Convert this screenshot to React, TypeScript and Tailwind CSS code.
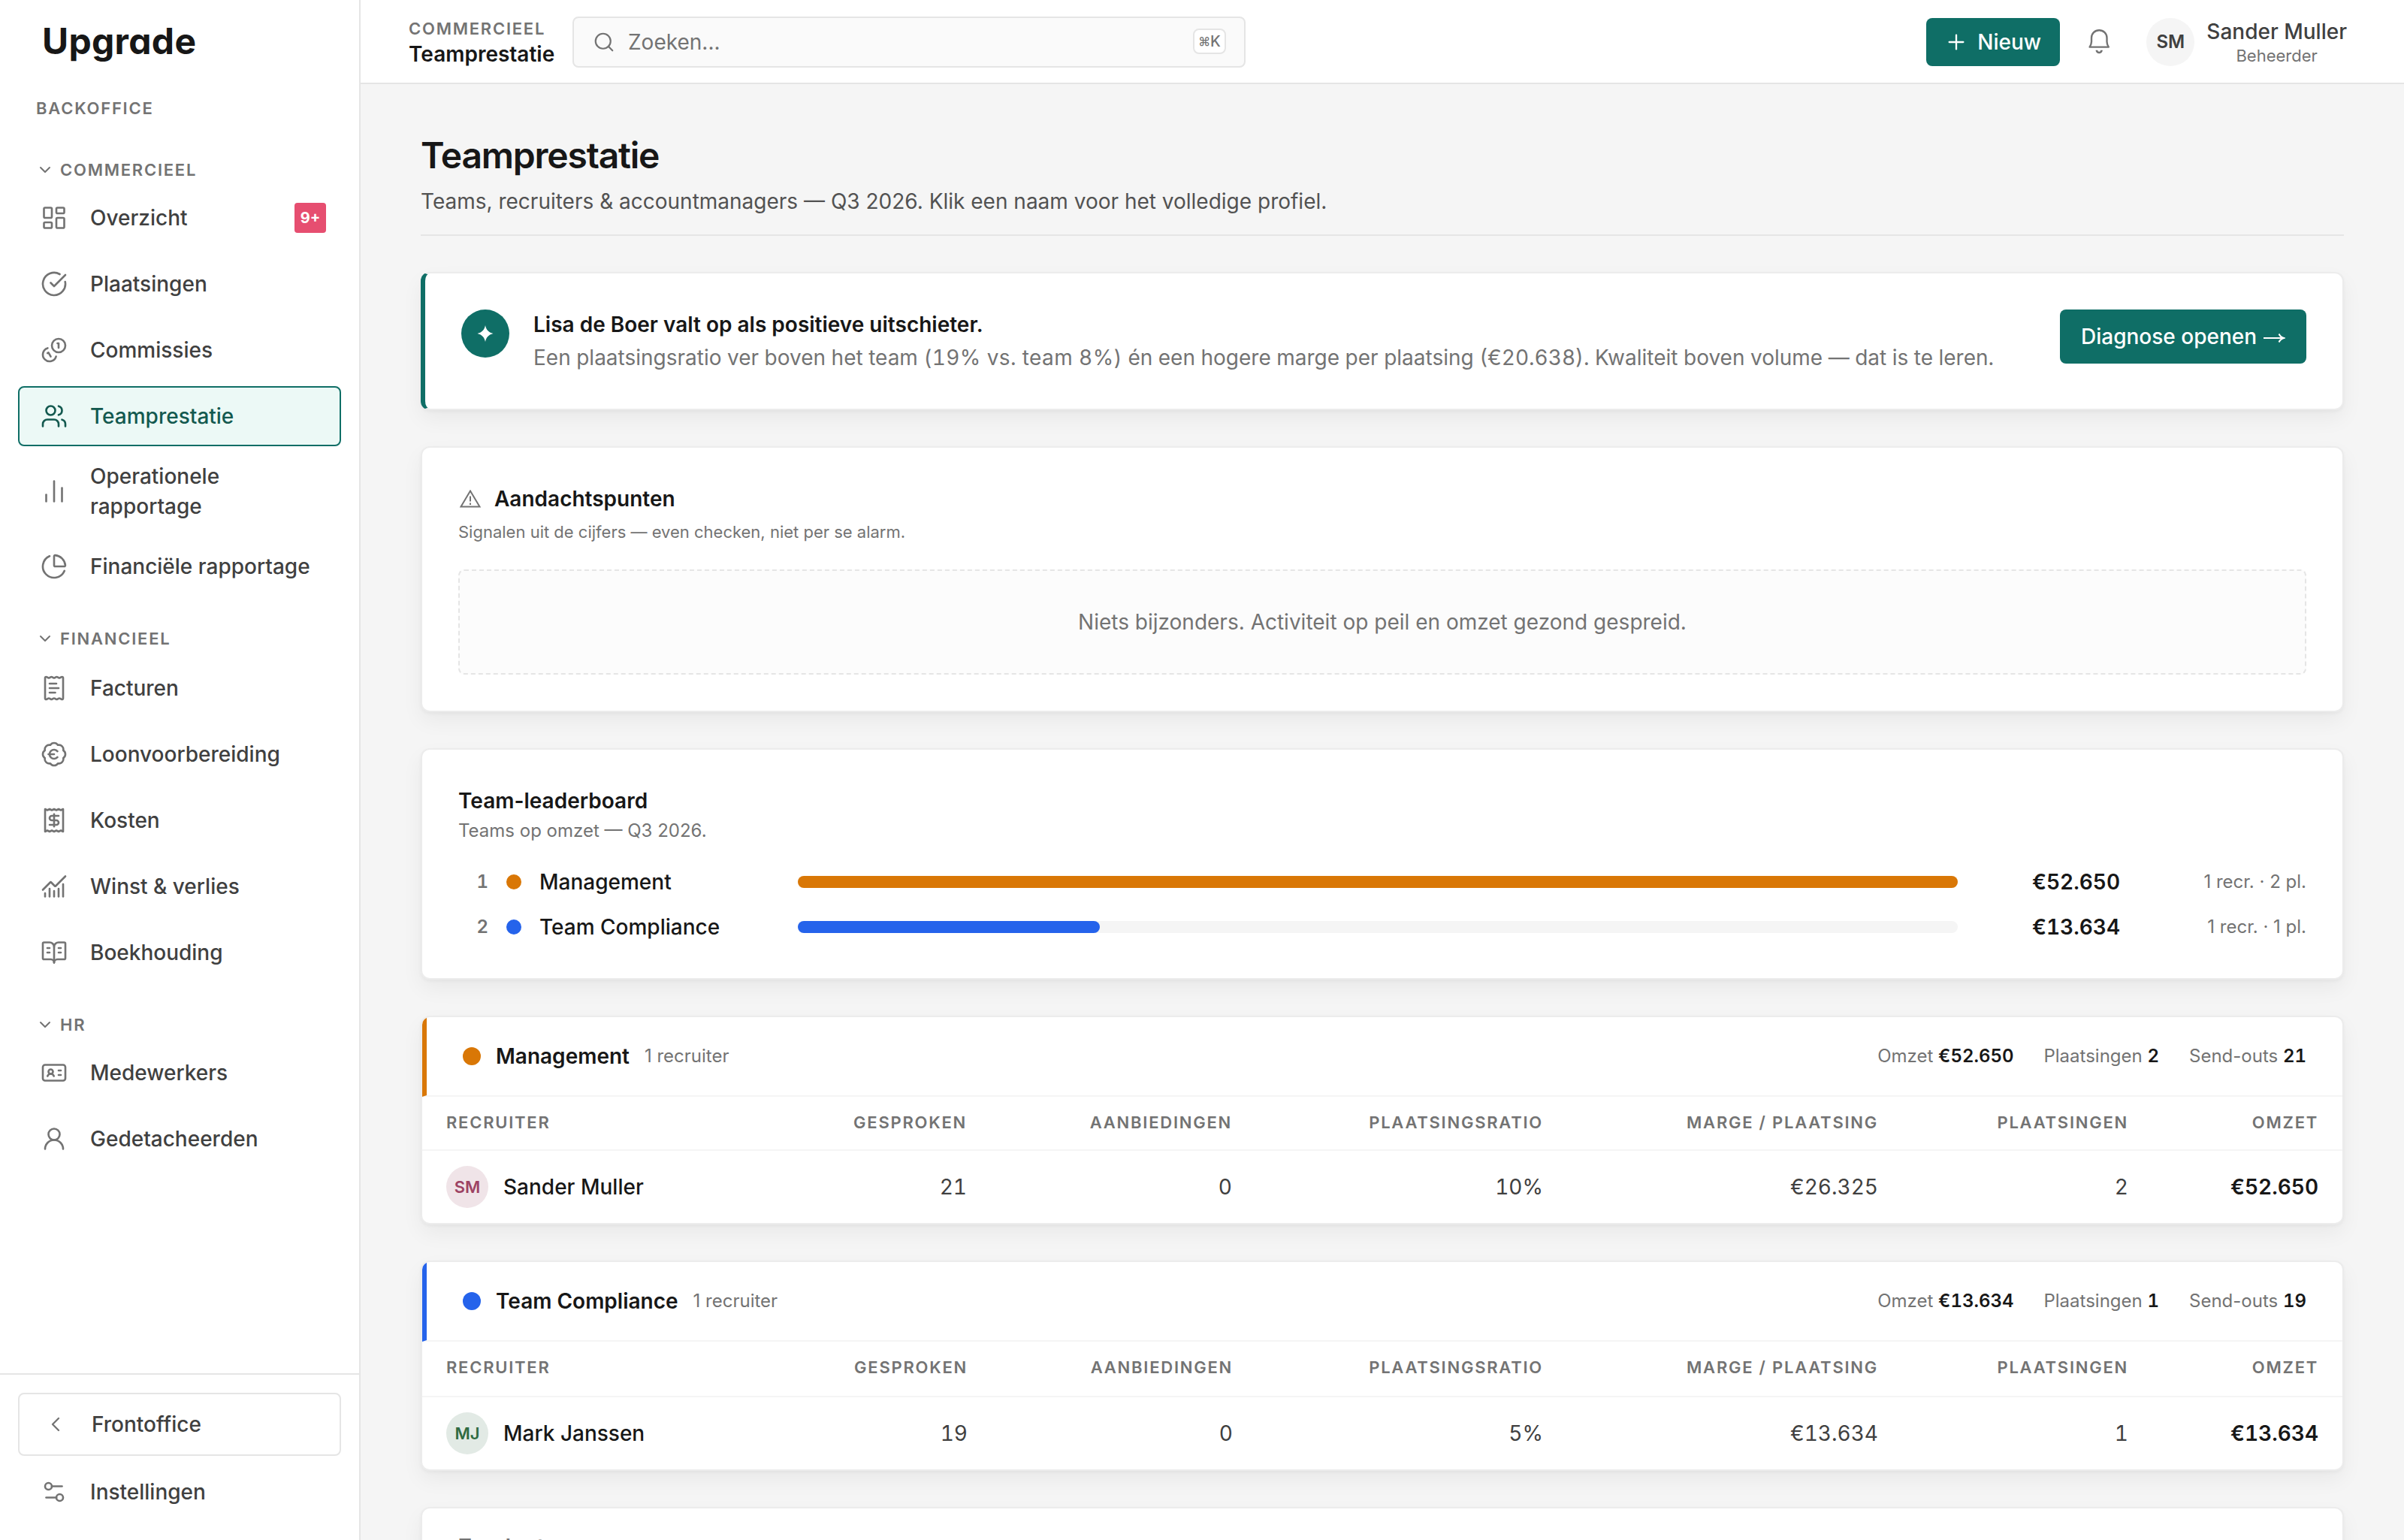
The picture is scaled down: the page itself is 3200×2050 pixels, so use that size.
import React from "react";
import {
  LayoutDashboard, CircleCheckBig, Users, ChartNoAxesColumn, ChartPie, ReceiptText, BadgeEuro, Receipt,
  ChartNoAxesCombined, BookOpenText, IdCard, UserRound, Settings2, ChevronDown, ChevronLeft, Search, Plus,
} from "lucide-react";

type Icon = React.ComponentType<{ className?: string; strokeWidth?: number }>;

function Coins({ className, strokeWidth }: { className?: string; strokeWidth?: number }) {
  return (
    <svg viewBox="0 0 24 24" className={className} fill="none" stroke="currentColor" strokeWidth={strokeWidth} strokeLinecap="round" strokeLinejoin="round">
      <path d="M13.744 17.736a6 6 0 1 1-7.48-7.48" />
      <path d="M15 6h1v4" />
      <path d="m6.134 14.768.866-.5 2 3.464" />
      <circle cx="16" cy="8" r="6" />
    </svg>
  );
}

function Bell({ className }: { className?: string }) {
  return (
    <svg viewBox="0 0 36 36" className={className} fill="none" stroke="currentColor" strokeLinejoin="round">
      <path strokeWidth="2.4" d="M18.200 2.200C12.500 2.200 8 6.700 8 12.300V17.500C8 20 7.200 22 5.600 24.600H30.800C29.200 22 28.500 20 28.500 17.500V12.300C28.500 6.700 24 2.200 18.200 2.200Z" />
      <path strokeWidth="2.700" d="M14.900 28.700a3.300 3.300 0 0 0 6.600 0" />
    </svg>
  );
}

function NavItem({ icon: I, label, active, badge, tall }: { icon: Icon; label: string; active?: boolean; badge?: string; tall?: boolean }) {
  return (
    <a
      className={`flex items-center rounded-lg border-2 pl-[26px] pr-[18px] text-[28px] font-medium leading-[39.2px] ${tall ? "h-[104px]" : "h-20"} ${
        active ? "border-[#0f6e66] bg-[#ecf9f6] text-[#13594f]" : "border-transparent text-[#404040]"
      }`}
    >
      <span className={`flex w-10 shrink-0 justify-center ${active ? "text-[#13594f]" : "text-[#737373]"}`}>
        <I className="size-9" strokeWidth={1.75} />
      </span>
      <span className="ml-7 flex-1 pt-px">{label}</span>
      {badge && (
        <span className="flex h-10 w-[42px] items-center justify-center rounded bg-[#e64e70] text-xl font-bold leading-none text-white">{badge}</span>
      )}
    </a>
  );
}

function Section({ title, children, className = "", gap = "mt-2" }: { title: string; children: React.ReactNode; className?: string; gap?: string }) {
  return (
    <section className={className}>
      <div className="ml-6 flex h-8 items-center gap-2 text-[22px] font-semibold leading-8 tracking-[1.76px] text-[#737373]">
        <ChevronDown className="size-6" strokeWidth={2} />
        {title}
      </div>
      <div className={`flex flex-col gap-2 ${gap}`}>{children}</div>
    </section>
  );
}

const cardCls =
  "rounded-xl border-2 border-[#ececec] bg-white shadow-[0_2px_4px_rgba(0,0,0,0.04),0_12px_28px_rgba(0,0,0,0.05)]";

function LeaderRow({ rank, name, dot, width, amount, meta }: { rank: number; name: string; dot: string; width: string; amount: string; meta: string }) {
  return (
    <div className="flex h-[60px] items-center">
      <span className="w-10 text-right text-2xl font-semibold tabular-nums text-[#737373]">{rank}</span>
      <span className={`ml-6 size-5 rounded-full ${dot}`} />
      <span className="ml-6 w-[344px] text-[28px] font-medium text-[#171717]">{name}</span>
      <span className="h-4 flex-1 rounded-full bg-[#f5f5f5]">
        <span className={`block h-4 rounded-full ${dot}`} style={{ width }} />
      </span>
      <span className="w-[216px] text-right text-[28px] font-semibold tabular-nums text-[#171717]">{amount}</span>
      <span className="w-[248px] text-right text-2xl text-[#737373]">{meta}</span>
    </div>
  );
}

function Stat({ label, value }: { label: string; value: string }) {
  return (
    <span>
      {label} <b className="font-semibold tabular-nums text-[#171717]">{value}</b>
    </span>
  );
}

interface Team {
  name: string;
  accent: string;
  dot: string;
  omzet: string;
  placements: string;
  sendOuts: string;
  initials: string;
  avatar: string;
  recruiter: string;
  cells: string[];
  headH: string;
  cols: string;
}

function TeamCard({ t }: { t: Team }) {
  return (
    <div className={`${cardCls} overflow-hidden`}>
      <div className={`flex h-[106px] items-center border-b-2 border-l-[6px] border-b-[#f5f5f5] pl-12 pr-12 ${t.accent}`}>
        <span className={`size-6 rounded-full ${t.dot}`} />
        <span className="ml-5 text-[28px] font-semibold text-[#171717]">{t.name}</span>
        <span className="ml-5 text-2xl text-[#737373]">1 recruiter</span>
        <div className="ml-auto flex gap-10 text-2xl text-[#737373]">
          <Stat label="Omzet" value={t.omzet} />
          <Stat label="Plaatsingen" value={t.placements} />
          <Stat label="Send-outs" value={t.sendOuts} />
        </div>
      </div>
      <div className={`grid ${t.cols} ${t.headH} items-center border-b-2 border-[#f5f5f5] pr-8 text-right text-[22px] font-semibold leading-8 tracking-[1.76px] text-[#737373]`}>
        <div className="flex justify-between pl-8">
          <span>RECRUITER</span>
          <span>GESPROKEN</span>
        </div>
        <span>AANBIEDINGEN</span>
        <span>PLAATSINGSRATIO</span>
        <span>MARGE / PLAATSING</span>
        <span>PLAATSINGEN</span>
        <span>OMZET</span>
      </div>
      <div className={`grid ${t.cols} h-24 items-center pr-8 text-right text-[28px] tabular-nums text-[#404040]`}>
        <div className="flex items-center pl-8">
          <span className={`flex size-14 items-center justify-center rounded-full text-[22px] font-semibold ${t.avatar}`}>{t.initials}</span>
          <span className="ml-5 font-medium text-[#171717]">{t.recruiter}</span>
          <span className="ml-auto">{t.cells[0]}</span>
        </div>
        <span>{t.cells[1]}</span>
        <span>{t.cells[2]}</span>
        <span>{t.cells[3]}</span>
        <span>{t.cells[4]}</span>
        <span className="font-semibold text-[#171717]">{t.cells[5]}</span>
      </div>
    </div>
  );
}

const teams: Team[] = [
  {
    name: "Management", accent: "border-l-[#d97706]", dot: "bg-[#d97706]", omzet: "€52.650", placements: "2", sendOuts: "21",
    initials: "SM", avatar: "bg-[#f0e4e8] text-[#9d4263]", recruiter: "Sander Muller",
    cells: ["21", "0", "10%", "€26.325", "2", "€52.650"], headH: "h-[72px] pb-0.5",
    cols: "grid-cols-[725px_353px_414px_446px_333px_253px]",
  },
  {
    name: "Team Compliance", accent: "border-l-[#2563eb]", dot: "bg-[#2563eb]", omzet: "€13.634", placements: "1", sendOuts: "19",
    initials: "MJ", avatar: "bg-[#e2eae5] text-[#2f6b41]", recruiter: "Mark Janssen",
    cells: ["19", "0", "5%", "€13.634", "1", "€13.634"], headH: "h-[74px] pb-1",
    cols: "grid-cols-[726px_353px_413px_446px_333px_253px]",
  },
];

export default function App() {
  return (
    <div className="flex h-[2050px] w-[3200px] overflow-hidden bg-[#f5f5f5] font-['Inter',sans-serif] text-[#171717]">
      <aside className="flex w-[480px] shrink-0 flex-col border-r-2 border-[#e5e5e5] bg-white">
        <div className="ml-14 mt-6 h-16 text-[48px] font-bold leading-[62px] tracking-[0.3px] [font-feature-settings:'cv11']">Upgrade</div>
        <div className="ml-12 mt-10 h-8 text-[22px] font-semibold leading-8 tracking-[1.76px] text-[#737373]">BACKOFFICE</div>
        <nav className="mt-[50px] px-6">
          <Section title="COMMERCIEEL">
            <NavItem icon={LayoutDashboard} label="Overzicht" badge="9+" />
            <NavItem icon={CircleCheckBig} label="Plaatsingen" />
            <NavItem icon={Coins} label="Commissies" />
            <NavItem icon={Users} label="Teamprestatie" active />
            <NavItem icon={ChartNoAxesColumn} label="Operationele rapportage" tall />
            <NavItem icon={ChartPie} label="Financiële rapportage" />
          </Section>
          <Section title="FINANCIEEL" className="mt-10" gap="mt-2.5">
            <NavItem icon={ReceiptText} label="Facturen" />
            <NavItem icon={BadgeEuro} label="Loonvoorbereiding" />
            <NavItem icon={Receipt} label="Kosten" />
            <NavItem icon={ChartNoAxesCombined} label="Winst & verlies" />
            <NavItem icon={BookOpenText} label="Boekhouding" />
          </Section>
          <Section title="HR" className="mt-10">
            <NavItem icon={IdCard} label="Medewerkers" />
            <NavItem icon={UserRound} label="Gedetacheerden" />
          </Section>
        </nav>
        <div className="mt-auto h-[222px] border-t-2 border-[#e5e5e5] px-6 pt-6">
          <a className="flex h-[84px] items-center rounded-lg border-2 border-[#e5e5e5] pl-8 text-[28px] font-medium text-[#404040]">
            <ChevronLeft className="size-8 text-[#737373]" strokeWidth={1.75} />
            <span className="ml-8">Frontoffice</span>
          </a>
          <div className="mt-2">
            <NavItem icon={Settings2} label="Instellingen" />
          </div>
        </div>
      </aside>

      <div className="flex flex-1 flex-col">
        <header className="flex h-28 shrink-0 items-center border-b-2 border-[#e5e5e5] bg-white pl-16 pr-[76px] pt-0.5">
          <div className="w-[218px]">
            <div className="text-[22px] font-semibold leading-8 tracking-[1.76px] text-[#737373]">COMMERCIEEL</div>
            <div className="text-[28px] font-semibold leading-9">Teamprestatie</div>
          </div>
          <div className="flex h-[68px] w-[896px] items-center rounded-lg border-2 border-[#e5e5e5] bg-[#fafafa] pl-[25px] pr-6">
            <Search className="size-[30px] text-[#737373]" strokeWidth={1.75} />
            <span className="ml-[17px] text-[28px] text-[#737373]">Zoeken...</span>
            <kbd className="mb-0.5 ml-auto flex h-[34px] w-11 items-center justify-center rounded-lg border-2 border-[#e5e5e5] bg-white font-['Inter',sans-serif] font-medium leading-none text-[#737373]">
              <span className="text-base">⌘</span>
              <span className="text-xl leading-none">K</span>
            </kbd>
          </div>
          <button className="ml-auto flex h-16 w-[178px] items-center rounded-lg bg-[#0f6e66] pl-6 text-[28px] font-medium text-white">
            <Plus className="size-8" strokeWidth={1.75} />
            <span className="ml-3">Nieuw</span>
          </button>
          <Bell className="ml-[34px] size-9 text-[#737373]" />
          <span className="ml-[45px] flex size-16 items-center justify-center rounded-full bg-[#f5f5f5] text-2xl font-semibold text-[#404040]">SM</span>
          <div className="ml-4 text-center">
            <div className="text-[28px] font-medium leading-9 text-[#404040]">Sander Muller</div>
            <div className="text-[22px] leading-7 text-[#737373]">Beheerder</div>
          </div>
        </header>

        <main className="flex flex-col px-20">
          <div className="h-[202px] shrink-0 border-b-2 border-[#e5e5e5] pt-[63px]">
            <h1 className="text-[48px] font-semibold leading-[64px] tracking-[-1.2px]">Teamprestatie</h1>
            <p className="mt-[9px] text-[28px] leading-10 text-[#525252]">
              Teams, recruiters &amp; accountmanagers — Q3 2026. Klik een naam voor het volledige profiel.
            </p>
          </div>

          <div className="mt-12 flex flex-col gap-12">
            <div className={`${cardCls} flex h-[184px] items-start border-l-[6px] border-l-[#0f6e66] pl-12 pr-12 pt-12`}>
              <span className="flex size-16 shrink-0 items-center justify-center rounded-full bg-[#0f6e66]">
                <svg viewBox="0 0 24 24" className="size-6 fill-white"><path d="M12 1c1.3 6 4 9.300 10.500 11C16 13.700 13.300 17 12 23 10.700 17 8 13.700 1.500 12 8 10.300 10.700 7 12 1z" /></svg>
              </span>
              <div className="ml-8 text-[28px] leading-[44px]">
                <div className="-mt-0.5 font-semibold">Lisa de Boer valt op als positieve uitschieter.</div>
                <div className="tabular-nums text-[#737373]">
                  Een plaatsingsratio ver boven het team <span className="tracking-[0.4px]">(19% vs. team 8%)</span> én een hogere marge per plaatsing (€20.638). Kwaliteit boven volume — dat is te leren.
                </div>
              </div>
              <button className="ml-auto flex h-[72px] w-[328px] items-center justify-center gap-2 rounded-lg bg-[#0f6e66] text-[28px] font-medium text-white">
                Diagnose openen
                <svg viewBox="0 0 30 16" className="mt-1 h-4 w-[30px] fill-none stroke-white stroke-2"><path d="M1 8h27M21.500 2.500c1.500 3 3.500 4.700 6.500 5.500-3 .8-5 2.500-6.500 5.500" /></svg>
              </button>
            </div>

            <div className={`${cardCls} h-[354px] px-12 pt-[46px]`}>
              <div className="flex h-11 items-center text-[28px] font-semibold">
                <svg viewBox="0 0 28 24" className="h-6 w-8 fill-none stroke-[#737373] stroke-2">
                  <path d="M14 1.500 26.500 22.500h-25z" strokeLinejoin="miter" />
                  <path d="M14 8.500v7M14 17.500v2.500" />
                </svg>
                <span className="ml-4">Aandachtspunten</span>
              </div>
              <div className="text-[22px] leading-[44px] text-[#737373]">Signalen uit de cijfers — even checken, niet per se alarm.</div>
              <div className="mt-7 flex h-[140px] items-center justify-center rounded-lg border-2 border-dashed border-[#e5e5e5] bg-[#fcfcfc] text-[28px] text-[#737373]">
                Niets bijzonders. Activiteit op peil en omzet gezond gespreid.
              </div>
            </div>

            <div className={`${cardCls} h-[308px] px-12 pt-12`}>
              <div className="text-[28px] font-semibold leading-10">Team-leaderboard</div>
              <div className="mb-[18px] text-2xl leading-10 text-[#737373]">Teams op omzet — Q3 2026.</div>
              <LeaderRow rank={1} name="Management" dot="bg-[#d97706]" width="100%" amount="€52.650" meta="1 recr. · 2 pl." />
              <LeaderRow rank={2} name="Team Compliance" dot="bg-[#2563eb]" width="26.05%" amount="€13.634" meta="1 recr. · 1 pl." />
            </div>

            {teams.map((t) => (
              <TeamCard key={t.name} t={t} />
            ))}

            <div className={`${cardCls} h-[280px] px-12`}>
              <div className="flex h-[102px] items-center text-[28px] font-semibold text-[#737373]">Zonder team</div>
            </div>
          </div>
        </main>
      </div>
    </div>
  );
}
